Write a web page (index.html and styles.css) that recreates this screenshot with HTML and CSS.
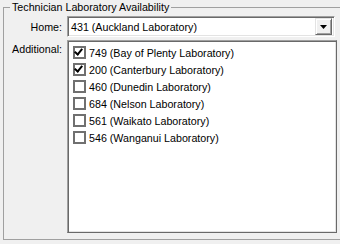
FILE: index.html
```html
<!DOCTYPE html>
<html lang="en">
<head>
    <meta charset="UTF-8">
    <title>Technician Laboratory Availability</title>
    <link rel="stylesheet" href="styles.css">
</head>
<body>
    <fieldset class="groupe">
        <legend>Technician Laboratory Availability</legend>
        <div class="grille">
            <label class="etiquette centre">Home:</label>
            <div class="combo">
                <span class="combo-texte">431 (Auckland Laboratory)</span>
                <span class="combo-bouton">
                    <svg width="7" height="4" viewBox="0 0 7 4"><path d="M0 0h7L3.5 4z" fill="#000"/></svg>
                </span>
            </div>

            <label class="etiquette haut">Additional:</label>
            <div class="liste">
                <div class="item"><span class="case coche"></span>749 (Bay of Plenty Laboratory)</div>
                <div class="item"><span class="case coche"></span>200 (Canterbury Laboratory)</div>
                <div class="item"><span class="case"></span>460 (Dunedin Laboratory)</div>
                <div class="item"><span class="case"></span>684 (Nelson Laboratory)</div>
                <div class="item"><span class="case"></span>561 (Waikato Laboratory)</div>
                <div class="item"><span class="case"></span>546 (Wanganui Laboratory)</div>
            </div>
        </div>
    </fieldset>
</body>
</html>
```

FILE: styles.css
```css
body {
    margin: 0;
    background-color: #f0f0f0;
    font-family: "Liberation Sans", Arial, sans-serif;
    font-size: 10.7px;
    color: #000;
}

.groupe {
    margin: 0 -3px 0 3px;
    padding: 2px 5px 6px 0;
    border: 1px solid #a0a0a0;
    min-width: 0;
}

.groupe legend {
    margin-left: 6px;
    padding: 0 2px;
    line-height: 14px;
}

.grille {
    display: grid;
    grid-template-columns: 58px 1fr;
    column-gap: 5px;
    row-gap: 3px;
}

.etiquette {
    text-align: right;
}

.etiquette.centre {
    align-self: center;
}

.etiquette.haut {
    padding-top: 3px;
}

.combo {
    display: flex;
    align-items: center;
    height: 21px;
    margin-right: 2px;
    box-sizing: border-box;
    background-color: #fff;
    border: 1px solid;
    border-color: #a0a0a0 #fff #fff #a0a0a0;
    box-shadow: inset 1px 1px #696969, inset -1px -1px #e3e3e3;
    padding: 1px 2px 1px 3px;
}

.combo-texte {
    flex: 1;
}

.combo-bouton {
    display: flex;
    align-items: center;
    justify-content: center;
    width: 17px;
    height: 17px;
    box-sizing: border-box;
    background-color: #f0f0f0;
    border: 1px solid;
    border-color: #e3e3e3 #696969 #696969 #e3e3e3;
    box-shadow: inset 1px 1px #fff, inset -1px -1px #a0a0a0;
}

.liste {
    height: 193px;
    box-sizing: border-box;
    background-color: #fff;
    border: 1px solid;
    border-color: #a0a0a0 #696969 #696969 #a0a0a0;
    box-shadow: inset 1px 1px #696969, inset -1px -1px #e3e3e3;
    padding: 3px 5px;
}

.item {
    display: flex;
    align-items: center;
    height: 17px;
    gap: 3px;
}

.case {
    position: relative;
    width: 13px;
    height: 13px;
    box-sizing: border-box;
    border: 2px solid #707070;
    background-color: #fff;
}

.case.coche::after {
    content: "";
    position: absolute;
    left: 1px;
    top: -1px;
    width: 3px;
    height: 6px;
    border: solid #000;
    border-width: 0 2px 2px 0;
    transform: rotate(40deg);
}
```
